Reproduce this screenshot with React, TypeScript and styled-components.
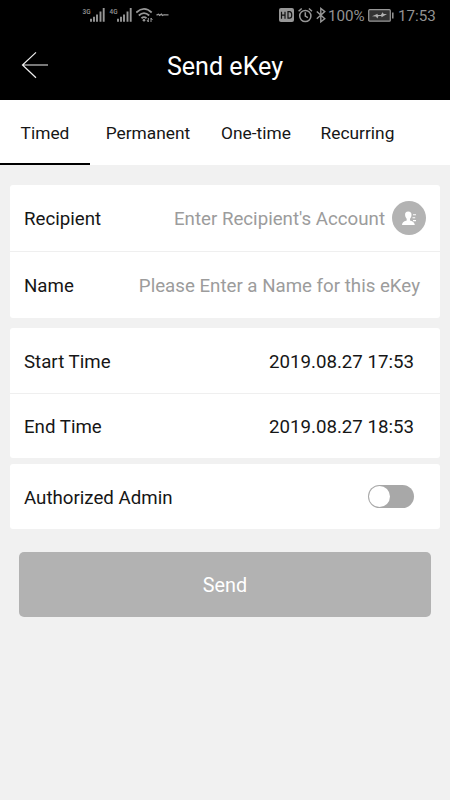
import React, { useState } from "react";
import styled, { createGlobalStyle } from "styled-components";

const GlobalStyle = createGlobalStyle`
  * { box-sizing: border-box; }
  body { margin: 0; background: #f1f1f1; font-family: Roboto, "Liberation Sans", sans-serif; font-weight: 400; }
  button { font: inherit; border: 0; padding: 0; background: none; }
`;

const Screen = styled.div`
  width: 450px;
  height: 800px;
  overflow: hidden;
  background: #f1f1f1;
  color: #161616;
`;

const StatusBar = styled.div`
  height: 32px;
  padding: 0 15px 0 82px;
  display: flex;
  justify-content: space-between;
  background: #000;
  color: #929292;
`;

const StatusGroup = styled.div`
  display: flex;
  align-items: center;
  svg { display: block; flex: none; }
`;

const StatusText = styled.span<{ $width: number }>`
  width: ${(p) => p.$width}px;
  font-size: 15.2px;
  line-height: 32px;
  white-space: nowrap;
`;

const Header = styled.header`
  height: 68px;
  display: grid;
  grid-template-columns: 70px 1fr 70px;
  align-items: center;
  background: #000;
  color: #fff;
`;

const BackButton = styled.button`
  height: 68px;
  padding: 0 0 2px 21px;
  display: flex;
  align-items: center;
`;

const Title = styled.h1`
  margin: 0;
  padding-top: 2px;
  font-size: 25.1px;
  font-weight: 400;
  line-height: 66px;
  text-align: center;
`;

const Tabs = styled.nav`
  height: 65px;
  display: flex;
  background: #fff;
`;

const Tab = styled.button<{ $width: number; $active: boolean }>`
  width: ${(p) => p.$width}px;
  height: 65px;
  padding-top: 3px;
  border-bottom: 2px solid ${(p) => (p.$active ? "#000" : "transparent")};
  color: #161616;
  font-size: 17.35px;
  white-space: nowrap;
`;

const Form = styled.main`
  padding: 20px 10px 0;
`;

const Card = styled.section<{ $gap: number }>`
  margin-bottom: ${(p) => p.$gap}px;
  border-radius: 3px;
  background: #fff;
`;

const Row = styled.div<{ $height: number; $right: number; $top: number; $divided?: boolean }>`
  height: ${(p) => p.$height}px;
  padding: ${(p) => p.$top}px ${(p) => p.$right}px 0 14px;
  display: flex;
  align-items: center;
  justify-content: space-between;
  border-bottom: ${(p) => (p.$divided ? "1px solid #efefef" : "0")};
  font-size: 18.7px;
  white-space: nowrap;
`;

const Placeholder = styled.span`
  margin-left: auto;
  color: #9c9c9c;
`;

const Contact = styled.button`
  width: 34px;
  height: 34px;
  margin: -3px 0 0 7px;
  border-radius: 50%;
  background: #b3b3b3;
  svg { display: block; }
`;

const Switch = styled.button`
  width: 46px;
  height: 23px;
  margin-top: -2px;
  padding: 1px;
  border-radius: 12px;
  background: #a8a8a8;
`;

const Knob = styled.span<{ $on: boolean }>`
  display: block;
  width: 21px;
  height: 21px;
  margin-left: ${(p) => (p.$on ? 23 : 0)}px;
  border-radius: 50%;
  background: #fff;
`;

const SendButton = styled.button`
  display: block;
  width: 412px;
  height: 65px;
  margin: 0 auto;
  padding-top: 1px;
  border-radius: 5px;
  background: #b2b2b2;
  color: #fff;
  font-size: 19.8px;
`;

const NetworkLabel = styled.text`
  font: 500 7.5px "Roboto", sans-serif;
  fill: #979797;
`;

const Signal = ({ label }: { label: string }) => (
  <svg width="27" height="32" viewBox="0 0 27 32">
    <NetworkLabel x="0.5" y="14" textLength="8" lengthAdjust="spacingAndGlyphs">{label}</NetworkLabel>
    <path d="M9 21.7v-3M12 21.7v-5M15 21.7V14.5M18.5 21.7V11.5M21.7 21.7V8" stroke="#979797" strokeWidth="1.9" />
  </svg>
);

const Wifi = () => (
  <svg width="20" height="32" viewBox="0 0 20 32" fill="none" stroke="#979797" strokeWidth="1.8">
    <path d="M.3 12.5Q8 5.2 15.7 12.5M2.8 15.5Q8 10.7 13.2 15.5M5.5 18.2Q8 16 10.5 18.2" />
    <circle cx="8" cy="20.3" r="1.3" fill="#979797" stroke="none" />
    <path d="M12.3 18v4M11 20l1.3 2M15 22v-4M15 18l1.4 2" strokeWidth="1" />
  </svg>
);

const Speed = () => (
  <svg width="16" height="32" viewBox="0 0 16 32" fill="none" stroke="#979797">
    <path d="M.5 15.2l2-1 1 1.2 2-1.2 1 1.3 2-1M8 14.8h4.5" strokeWidth="1.3" />
  </svg>
);

const Hd = () => (
  <svg width="19" height="32" viewBox="0 0 19 32">
    <rect x="0" y="8" width="15" height="14" rx="2" fill="#979797" />
    <path d="M2.5 11.7v7M6 11.7v7M2.5 15.2H6M9 11.7v6.5h1.5c3 0 3-6.5 0-6.5Z" fill="none" stroke="#111" strokeWidth="1.2" />
  </svg>
);

const Alarm = () => (
  <svg width="18" height="32" viewBox="0 0 18 32" fill="none" stroke="#979797" strokeWidth="1.5">
    <circle cx="7.3" cy="16" r="5.6" />
    <path d="M7.3 12.3v3.8l2.6 1.5M.6 11.3l3.1-2.8M10.9 8.5l3.1 2.8" />
  </svg>
);

const Bluetooth = () => (
  <svg width="12" height="32" viewBox="0 0 12 32" fill="none" stroke="#979797" strokeWidth="1.4">
    <path d="M.8 11.5l8 7.2-4 3.2V8.5l4 3.1-8 7.2" />
  </svg>
);

const Battery = () => (
  <svg width="30" height="32" viewBox="0 0 30 32">
    <rect x=".7" y="9.7" width="21.6" height="11.5" rx="1" fill="#333" stroke="#979797" strokeWidth="1.2" />
    <path d="M24.8 12.5v6" stroke="#979797" strokeWidth="1.5" />
    <path d="M4 16.2l5.7-2.5-.1 1.3 3.3-.1 1.7-2.7 1.1 1.8 3.3-.1-5.4 3.3-.3-1.2-2.8.1-1.1 2.5-1.5-2.1Z" fill="#b0b0b0" />
  </svg>
);

const BackArrow = () => (
  <svg width="28" height="28" viewBox="0 0 28 28" fill="none" stroke="#f0f0f0" strokeWidth="1.2">
    <path d="M27 14H1.5M15 1.4L1.5 14 15 26.7" />
  </svg>
);

const Person = () => (
  <svg width="34" height="34" viewBox="0 0 34 34" fill="#fff">
    <path d="M16.2 10.5c-2.3 0-3.3 1.4-3.1 3.6.1 1.6.7 2.8 1.6 3.7v1.8c-1.8.7-4.3 1.1-4.7 4.3h12.8c-.4-3.2-3.1-3.6-4.8-4.3v-1.8c.9-.9 1.4-2.1 1.5-3.7.1-2.2-1-3.6-3.3-3.6Z" />
    <path d="M21 13.8h3M20.5 16.7h2.7M21 19.6h3" stroke="#fff" strokeWidth="1.1" />
  </svg>
);

const tabs = [
  { name: "Timed", width: 90 },
  { name: "Permanent", width: 116 },
  { name: "One-time", width: 100 },
  { name: "Recurring", width: 103 },
];

export default function App() {
  const [active, setActive] = useState("Timed");
  const [authorized, setAuthorized] = useState(false);
  return (
    <Screen>
      <GlobalStyle />
      <StatusBar>
        <StatusGroup>
          <Signal label="3G" /><Signal label="4G" /><Wifi /><Speed />
        </StatusGroup>
        <StatusGroup>
          <Hd /><Alarm /><Bluetooth />
          <StatusText $width={40}>100%</StatusText>
          <Battery />
          <StatusText $width={37}>17:53</StatusText>
        </StatusGroup>
      </StatusBar>
      <Header>
        <BackButton aria-label="Back"><BackArrow /></BackButton>
        <Title>Send eKey</Title>
      </Header>
      <Tabs>
        {tabs.map((tab) => (
          <Tab key={tab.name} $width={tab.width} $active={active === tab.name} onClick={() => setActive(tab.name)}>
            {tab.name}
          </Tab>
        ))}
      </Tabs>
      <Form>
        <Card $gap={10}>
          <Row $height={67} $right={14} $top={2} $divided>
            <span>Recipient</span>
            <Placeholder>Enter Recipient's Account</Placeholder>
            <Contact aria-label="Contacts"><Person /></Contact>
          </Row>
          <Row $height={66} $right={20} $top={1}>
            <span>Name</span>
            <Placeholder>Please Enter a Name for this eKey</Placeholder>
          </Row>
        </Card>
        <Card $gap={6}>
          <Row $height={66} $right={26} $top={2} $divided>
            <span>Start Time</span>
            <span>2019.08.27 17:53</span>
          </Row>
          <Row $height={64} $right={26} $top={1}>
            <span>End Time</span>
            <span>2019.08.27 18:53</span>
          </Row>
        </Card>
        <Card $gap={23}>
          <Row $height={65} $right={26} $top={2}>
            <span>Authorized Admin</span>
            <Switch role="switch" aria-label="Authorized Admin" aria-checked={authorized} onClick={() => setAuthorized(!authorized)}>
              <Knob $on={authorized} />
            </Switch>
          </Row>
        </Card>
        <SendButton>Send</SendButton>
      </Form>
    </Screen>
  );
}
